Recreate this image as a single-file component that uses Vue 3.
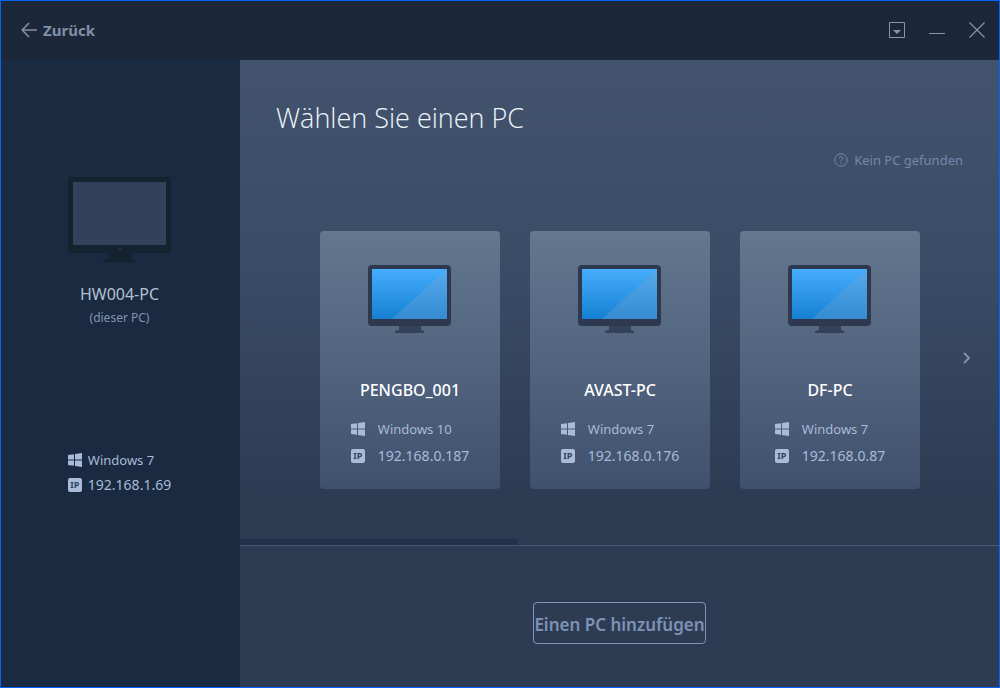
<script setup>
const computers = [
  { name: 'PENGBO_001', system: 'Windows 10', ip: '192.168.0.187' },
  { name: 'AVAST-PC', system: 'Windows 7', ip: '192.168.0.176' },
  { name: 'DF-PC', system: 'Windows 7', ip: '192.168.0.87' },
]
</script>

<template>
  <div class="window">
    <header class="titlebar">
      <button class="back" type="button">
        <svg width="16" height="16" viewBox="0 0 16 16" fill="none" stroke="currentColor" stroke-width="1.6">
          <path d="M8 1 1.2 8 8 15M1.2 8H16" />
        </svg>
        <span>Zurück</span>
      </button>
      <div class="controls">
        <button type="button" aria-label="Menü">
          <svg width="16" height="16" viewBox="0 0 16 16">
            <path d="M.5.5h15v15H.5z" fill="none" stroke="currentColor" />
            <path d="M4 8h8l-4 4z" fill="currentColor" />
          </svg>
        </button>
        <button type="button" aria-label="Minimieren">
          <svg width="16" height="16" viewBox="0 0 16 16"><path d="M0 11h16v1H0z" fill="currentColor" /></svg>
        </button>
        <button type="button" aria-label="Schließen">
          <svg width="16" height="16" viewBox="0 0 16 16"><path d="m.5.5 15 15M15.5.5l-15 15" fill="none" stroke="currentColor" stroke-width="1.2" /></svg>
        </button>
      </div>
    </header>

    <div class="body">
      <aside class="sidebar">
        <svg class="own-monitor" width="104" height="86" viewBox="0 0 104 86">
          <rect x="0" y="0" width="103" height="76" rx="3" fill="#14232f" />
          <rect x="5" y="5" width="93" height="63" fill="#33425a" />
          <path d="M41 76h22v5l6 4H33l8-4z" fill="#14222f" />
          <circle cx="52" cy="72" r="1.5" fill="#233444" />
        </svg>
        <h2>HW004-PC</h2>
        <p class="this-pc">(dieser PC)</p>
        <ul class="own-facts">
          <li>
            <svg class="glyph" width="14" height="14" viewBox="0 0 14 14" fill="currentColor">
              <path d="M0 2 6 1.200v5.300H0zM7 1 14 0v6.500H7zM0 7.500h6v5.300L0 12zM7 7.500h7V14l-7-1z" />
            </svg>
            <span>Windows 7</span>
          </li>
          <li><span class="ip-badge">IP</span><span class="ip">192.168.1.69</span></li>
        </ul>
      </aside>

      <main>
        <section class="chooser">
          <h1>Wählen Sie einen PC</h1>
          <a class="help" href="#">
            <svg width="14" height="14" viewBox="0 0 14 14" fill="none" stroke="currentColor">
              <circle cx="7" cy="7" r="6.2" />
              <path d="M5.2 5.5Q5.2 3.8 7 3.8t1.8 1.6Q8.8 6.3 7.7 6.9 7 7.3 7 8.4M7 9.5v1.2" />
            </svg>
            <span>Kein PC gefunden</span>
          </a>
          <div class="carousel">
            <div class="cards">
              <button v-for="pc in computers" :key="pc.name" class="card" type="button">
                <svg class="monitor" width="84" height="70" viewBox="0 0 84 70">
                  <defs>
                    <linearGradient :id="'screen-' + pc.name" x1="0" y1="0" x2="0" y2="1">
                      <stop offset="0" stop-color="#46adfc" />
                      <stop offset="1" stop-color="#1580d3" />
                    </linearGradient>
                  </defs>
                  <path d="M31 61h22v5l3 1v2H27v-2l4-1z" fill="#34415b" />
                  <rect x="0" y="1" width="83" height="61" rx="4" fill="#2e3950" />
                  <rect x="4" y="5" width="75" height="50" :fill="`url(#screen-${pc.name})`" />
                  <path d="M79 5v50H24z" fill="#79a6cd" fill-opacity=".32" />
                </svg>
                <strong>{{ pc.name }}</strong>
                <span class="facts">
                  <svg class="glyph" width="14" height="14" viewBox="0 0 14 14" fill="currentColor">
                    <path d="M0 2 6 1.200v5.300H0zM7 1 14 0v6.500H7zM0 7.500h6v5.300L0 12zM7 7.500h7V14l-7-1z" />
                  </svg>
                  <span>{{ pc.system }}</span>
                  <span class="ip-badge">IP</span>
                  <span class="ip">{{ pc.ip }}</span>
                </span>
              </button>
            </div>
            <button class="next" type="button" aria-label="Weiter">
              <svg width="8" height="12" viewBox="0 0 8 12" fill="none" stroke="currentColor" stroke-width="1.8"><path d="m1 1 5 5-5 5" /></svg>
            </button>
          </div>
          <div class="scroll"><div class="thumb"></div></div>
        </section>
        <footer>
          <button class="add" type="button">Einen PC hinzufügen</button>
        </footer>
      </main>
    </div>
  </div>
</template>

<style>
body {
  margin: 0;
}
</style>

<style scoped>
* {
  box-sizing: border-box;
}
.window {
  min-height: 100vh;
  display: flex;
  flex-direction: column;
  border: 1px solid #0564f8;
  background: #1a2a40;
  color: #a9bbd8;
  font-family: "Noto Sans", "Open Sans", sans-serif;
  font-size: 13px;
  line-height: 20px;
}
button {
  margin: 0;
  padding: 0;
  border: 0;
  background: none;
  color: inherit;
  font: inherit;
  cursor: pointer;
}
svg {
  display: block;
  flex: none;
}
h1,
h2,
p,
ul {
  margin: 0;
  padding: 0;
}
.titlebar {
  height: 59px;
  display: flex;
  align-items: center;
  justify-content: space-between;
  padding: 0 14px 2px 20px;
  background: #1c283a;
  color: #8090a8;
}
.back {
  display: flex;
  align-items: center;
  gap: 6px;
  font-size: 15px;
  font-weight: 700;
}
.controls {
  display: flex;
  gap: 24px;
  color: #8796ad;
}
.body {
  flex: 1;
  display: grid;
  grid-template-columns: 239px 1fr;
}
.sidebar {
  display: flex;
  flex-direction: column;
  align-items: center;
  padding: 117px 2px 0 0;
}
h2 {
  margin-top: 21px;
  color: #b3c1d4;
  font-size: 16px;
  font-weight: 400;
}
.this-pc {
  margin-top: 4px;
  color: #8493b5;
  font-size: 12px;
}
.own-facts {
  display: grid;
  gap: 5px;
  margin-top: 122px;
  list-style: none;
}
.own-facts li {
  display: flex;
  align-items: center;
  gap: 6px;
}
.ip {
  font-size: 14px;
}
.ip-badge {
  flex: none;
  width: 14px;
  height: 14px;
  border-radius: 2px;
  background: #a9bbd8;
  color: #34445f;
  font-size: 9px;
  font-weight: 700;
  line-height: 14px;
  text-align: center;
}
main {
  display: flex;
  flex-direction: column;
  background: #2d3c53;
}
.chooser {
  display: flex;
  flex-direction: column;
  background: linear-gradient(#43536e, #3b4c67 40%, #2d3c53 90%);
}
h1 {
  padding: 38px 36px 0;
  color: #f0f5fc;
  font-family: "Open Sans", "Noto Sans", sans-serif;
  font-size: 27px;
  font-weight: 300;
  line-height: 40px;
}
.help {
  display: flex;
  align-items: center;
  align-self: flex-end;
  gap: 6px;
  margin: 12px 36px 0;
  color: #7387ab;
  text-decoration: none;
}
.carousel {
  display: grid;
  grid-template-columns: 1fr auto;
  align-items: center;
  padding: 61px 28px 50px 80px;
}
.cards {
  display: grid;
  grid-template-columns: repeat(3, 1fr);
  gap: 30px;
  margin-right: 43px;
}
.card {
  display: flex;
  flex-direction: column;
  align-items: center;
  padding: 33px 0 23px;
  border-radius: 4px;
  background: linear-gradient(#64778f, #40516e);
}
.card strong {
  margin-top: 45px;
  color: #fff;
  font-size: 16px;
  font-weight: 500;
  line-height: 22px;
}
.facts {
  display: grid;
  grid-template-columns: 14px auto;
  align-items: center;
  gap: 7px 13px;
  margin-top: 18px;
  text-align: left;
}
.next {
  padding-bottom: 4px;
  color: #8494ae;
}
.scroll {
  height: 7px;
  border-bottom: 1px solid #485871;
}
.thumb {
  width: 278px;
  height: 6px;
  background: #23324a;
}
footer {
  flex: 1;
  display: flex;
  justify-content: center;
  align-items: flex-start;
  padding: 56px 0 43px;
}
.add {
  height: 42px;
  padding-top: 3px;
  border: 1px solid #8395b6;
  border-radius: 4px;
  color: #7e92b6;
  font-size: 17px;
  font-weight: 600;
}
</style>
